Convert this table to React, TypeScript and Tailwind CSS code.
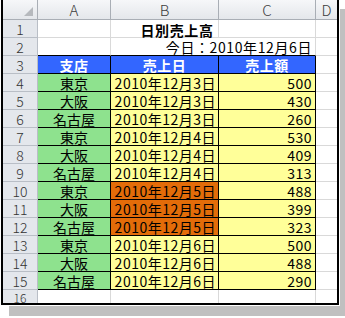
import React from "react";

const F = { fontFamily: '"Noto Sans CJK JP", "Noto Sans", sans-serif' };

type Row = { n: number; a: string; d: string; v: string; hot?: boolean };

const data: Row[] = [
  { n: 4, a: "東京", d: "2010年12月3日", v: "500" },
  { n: 5, a: "大阪", d: "2010年12月3日", v: "430" },
  { n: 6, a: "名古屋", d: "2010年12月3日", v: "260" },
  { n: 7, a: "東京", d: "2010年12月4日", v: "530" },
  { n: 8, a: "大阪", d: "2010年12月4日", v: "409" },
  { n: 9, a: "名古屋", d: "2010年12月4日", v: "313" },
  { n: 10, a: "東京", d: "2010年12月5日", v: "488", hot: true },
  { n: 11, a: "大阪", d: "2010年12月5日", v: "399", hot: true },
  { n: 12, a: "名古屋", d: "2010年12月5日", v: "323", hot: true },
  { n: 13, a: "東京", d: "2010年12月6日", v: "500" },
  { n: 14, a: "大阪", d: "2010年12月6日", v: "488" },
  { n: 15, a: "名古屋", d: "2010年12月6日", v: "290" },
];

const rowCls = "grid grid-cols-[35px_73px_108px_97px_21px] h-[18px]";
const rh =
  "bg-[#e4e7ec] border-r border-b border-[#b9bec6] flex items-center justify-center text-[14px] font-light text-[#333] leading-none";
const gl = "border-r border-b border-[#d9d9d9]";
const glD = "border-b border-[#d9d9d9]";

export default function App() {
  return (
    <div className="w-[345px] h-[318px] bg-white overflow-hidden" style={F}>
      <div className="ml-[1px] w-[338px] h-[305px] border-l-2 border-r-2 border-b-2 border-black bg-white overflow-hidden shadow-[0_0_0_1px_#fff,9px_10px_0_1px_#c0c0c0]">
        {/* column header */}
        <div className="grid grid-cols-[35px_73px_108px_97px_21px] h-[20px] bg-gradient-to-b from-[#f6f7f9] to-[#e3e6ea] text-[15px] text-[#3c3c3c] leading-none">
          <div className="border-r border-b border-[#a9aeb5] relative flex items-end justify-end pr-[4px] pb-[3px]">
            <svg width="9" height="9" viewBox="0 0 9 9">
              <polygon points="9,0 9,9 0,9" fill="#b6b9bd" />
            </svg>
          </div>
          <div className="border-r border-b border-[#a9aeb5] flex items-center justify-center font-light">A</div>
          <div className="border-r border-b border-[#a9aeb5] flex items-center justify-center font-light">B</div>
          <div className="border-r border-b border-[#a9aeb5] flex items-center justify-center font-light">C</div>
          <div className="border-b border-[#a9aeb5] flex items-center justify-center font-light">D</div>
        </div>

        {/* row 1 */}
        <div className={rowCls}>
          <div className={`${rh} row-start-1 col-start-1`}>1</div>
          <div className={`${gl} row-start-1 col-start-2`} />
          <div className={`${gl} row-start-1 col-start-3`} />
          <div className={`${gl} row-start-1 col-start-4`} />
          <div className={`${glD} row-start-1 col-start-5`} />
          <div className="row-start-1 col-start-2 col-span-3 flex items-center justify-center text-[14px] font-bold text-black leading-none pt-[1px] tracking-[0.6px]">
            日別売上高
          </div>
        </div>

        {/* row 2 */}
        <div className={rowCls}>
          <div className={rh}>2</div>
          <div className="border-r border-r-[#d9d9d9] border-b border-b-black" />
          <div className="col-span-2 border-r border-r-[#d9d9d9] border-b border-b-black flex items-center justify-end pr-[3px] text-[14px] text-black leading-none pt-[1px] tracking-[0.6px]">
            今日：2010年12月6日
          </div>
          <div className={glD} />
        </div>

        {/* row 3 */}
        <div className={rowCls}>
          <div className={rh}>3</div>
          <div className="bg-[#3366ff] border-r border-b border-black flex items-center justify-center text-white font-bold text-[14px] leading-none pt-[1px] tracking-[0.5px]">
            支店
          </div>
          <div className="bg-[#3366ff] border-r border-b border-black flex items-center justify-center text-white font-bold text-[14px] leading-none pt-[1px] tracking-[0.5px]">
            売上日
          </div>
          <div className="bg-[#3366ff] border-r border-b border-black flex items-center justify-center text-white font-bold text-[14px] leading-none pt-[1px] tracking-[0.5px]">
            売上額
          </div>
          <div className={glD} />
        </div>

        {data.map((r) => (
          <div key={r.n} className={rowCls}>
            <div className={rh}>{r.n}</div>
            <div className="bg-[#8ee28e] border-r border-b border-black flex items-center justify-center text-[14px] text-black leading-none pt-[1px]">
              {r.a}
            </div>
            <div
              className={`${
                r.hot ? "bg-[#e36c09]" : "bg-[#ffff99]"
              } border-r border-b border-black flex items-center justify-end pr-[2px] text-[14px] text-black leading-none pt-[1px] tracking-[0.5px]`}
            >
              {r.d}
            </div>
            <div className="bg-[#ffff99] border-r border-b border-black flex items-center justify-end pr-[3px] text-[14px] text-black leading-none pt-[1px] tracking-[0.5px]">
              {r.v}
            </div>
            <div className={glD} />
          </div>
        ))}

        {/* row 16 */}
        <div className="grid grid-cols-[35px_73px_108px_97px_21px] h-[13px]">
          <div className="bg-[#e4e7ec] border-r border-[#b9bec6] flex items-center justify-center text-[12px] font-light text-[#333] leading-[12px] pt-[2px]">
            16
          </div>
          <div className="border-r border-[#d9d9d9]" />
          <div className="border-r border-[#d9d9d9]" />
          <div className="border-r border-[#d9d9d9]" />
          <div />
        </div>
      </div>
    </div>
  );
}
